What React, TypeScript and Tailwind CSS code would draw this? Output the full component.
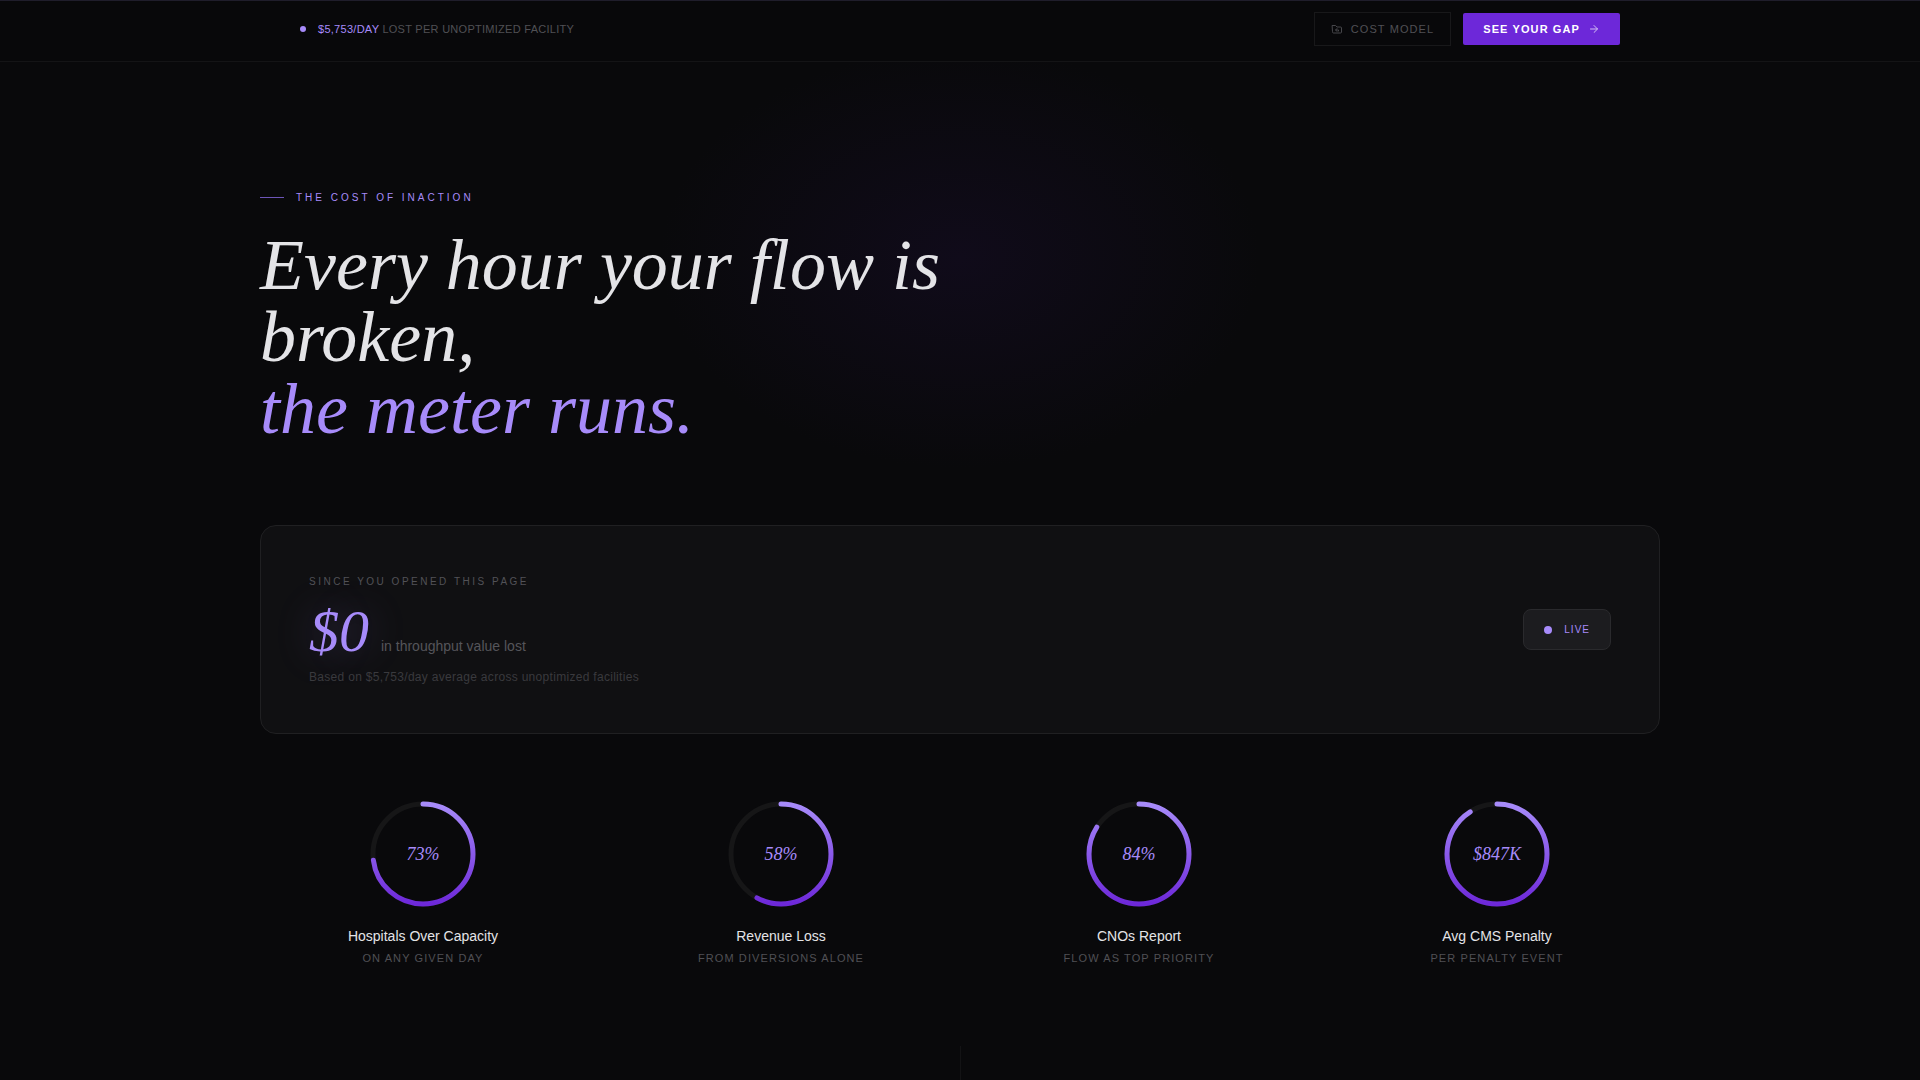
import { ArrowRight } from "lucide-react"

type Stat = { value: string; percent: number; title: string; note: string }

const stats: Stat[] = [
  { value: "73%", percent: 73, title: "Hospitals Over Capacity", note: "On any given day" },
  { value: "58%", percent: 58, title: "Revenue Loss", note: "From diversions alone" },
  { value: "84%", percent: 84, title: "CNOs Report", note: "Flow as top priority" },
  { value: "$847K", percent: 91, title: "Avg CMS Penalty", note: "Per penalty event" },
]

function FolderIcon() {
  return (
    <svg viewBox="0 0 24 24" className="size-3" fill="none" stroke="currentColor" strokeWidth="1.75" strokeLinecap="round" strokeLinejoin="round">
      <path d="M3 5h6l3 3h7a2 2 0 0 1 2 2v8a2 2 0 0 1-2 2H5a2 2 0 0 1-2-2z" />
      <path d="M12 11l-3 3 3 3M10 14h5v2" />
    </svg>
  )
}

function TopBar() {
  return (
    <header className="border-t border-b border-t-[#1f1d2b] border-b-[#141416] bg-[#08080a]">
      <div className="mx-auto flex h-[60px] max-w-[1400px] items-center justify-between px-10 pb-1">
        <p className="flex items-center gap-3 text-[11px] tracking-wide text-[#505055] uppercase">
          <span className="size-1.5 rounded-full bg-[#a78bfa]" />
          <span><span className="text-[#a78bfa]">$5,753/day</span> lost per unoptimized facility</span>
        </p>
        <div className="flex items-center gap-3">
          <a href="#model" className="flex h-[34px] items-center gap-2 border border-[#18181a] px-4 text-[11px] tracking-widest text-[#505055] uppercase">
            <FolderIcon />
            Cost model
          </a>
          <button className="flex h-8 items-center gap-2 rounded-[2px] bg-[#6d28d9] px-5 text-[11px] font-bold tracking-widest text-white uppercase">
            See your gap
            <ArrowRight size={12} className="opacity-70" />
          </button>
        </div>
      </div>
    </header>
  )
}

function Ring({ value, percent, id }: { value: string; percent: number; id: string }) {
  return (
    <div className="relative size-[120px]">
      <svg viewBox="0 0 120 120" className="size-full" fill="none" strokeWidth="5">
        <defs>
          <linearGradient id={id} x1="0" y1="0" x2="0" y2="1">
            <stop offset="0" stopColor="#a78bfa" />
            <stop offset="1" stopColor="#6d28d9" />
          </linearGradient>
        </defs>
        <circle cx="60" cy="60" r="50" stroke="#161617" />
        {/* start at 12 o'clock without rotating the gradient */}
        <path
          d="M60 10a50 50 0 1 1 0 100a50 50 0 1 1 0-100"
          stroke={`url(#${id})`}
          strokeLinecap="round"
          pathLength={100}
          strokeDasharray={`${percent} 100`}
        />
      </svg>
      <span className="absolute inset-0 flex items-center justify-center font-['Liberation_Serif',serif] text-lg text-[#a78bfa] italic">
        {value}
      </span>
    </div>
  )
}

export default function App() {
  return (
    <div className="min-h-screen overflow-hidden bg-[#09090b] font-['Liberation_Sans',sans-serif]">
      <TopBar />
      <main className="bg-[radial-gradient(ellipse_300px_210px_at_50%_196px,#100b1a,transparent)]">
        <div className="mx-auto max-w-[1400px] pt-32">
          <p className="flex items-center gap-3 text-[10px] leading-[15px] tracking-[3px] text-[#a78bfa] uppercase">
            <span className="h-px w-6 bg-[#6d55b8]" />
            The cost of inaction
          </p>
          <h1 className="mt-6 max-w-[800px] font-['Liberation_Serif',serif] text-[72px] leading-[72px] text-[#e4e4e7] italic">
            Every hour your flow is broken,
            <br />
            <span className="text-[#a78bfa]">the meter runs.</span>
          </h1>

          <section className="mt-20 flex items-center justify-between rounded-2xl border border-[#202022] bg-[#101012] p-12">
            <div>
              <p className="text-[10px] leading-[15px] tracking-[0.25em] text-[#525257] uppercase">Since you opened this page</p>
              <p className="mt-3 flex items-baseline gap-3">
                <span className="font-['Liberation_Serif',serif] text-[60px] leading-[60px] text-[#a78bfa] italic [text-shadow:0_0_40px_rgba(167,139,250,0.3)]">$0</span>
                <span className="text-sm text-[#55555a]">in throughput value lost</span>
              </p>
              <p className="mt-2 text-xs tracking-wide text-[#3a3a3e]">Based on $5,753/day average across unoptimized facilities</p>
            </div>
            <div className="flex items-center gap-3 rounded-lg border border-[#2a2a2d] bg-[#1c1c1f] px-5 py-3 text-[10px] leading-[15px] tracking-widest text-[#a78bfa] uppercase">
              <span className="size-2 rounded-full bg-[#a78bfa]" />
              Live
            </div>
          </section>

          <section className="mt-[60px] grid grid-cols-4 gap-8">
            {stats.map((s, i) => (
              <div key={s.title} className="flex flex-col items-center">
                <Ring value={s.value} percent={s.percent} id={`ring-${i}`} />
                <h2 className="mt-3 text-sm leading-5 text-[#e4e4e7]">{s.title}</h2>
                <p className="mt-1 text-[11px] leading-4 tracking-widest text-[#505055] uppercase">{s.note}</p>
              </div>
            ))}
          </section>
        </div>
        <div className="mx-auto mt-20 h-12 w-px bg-[#131315]" />
      </main>
    </div>
  )
}
